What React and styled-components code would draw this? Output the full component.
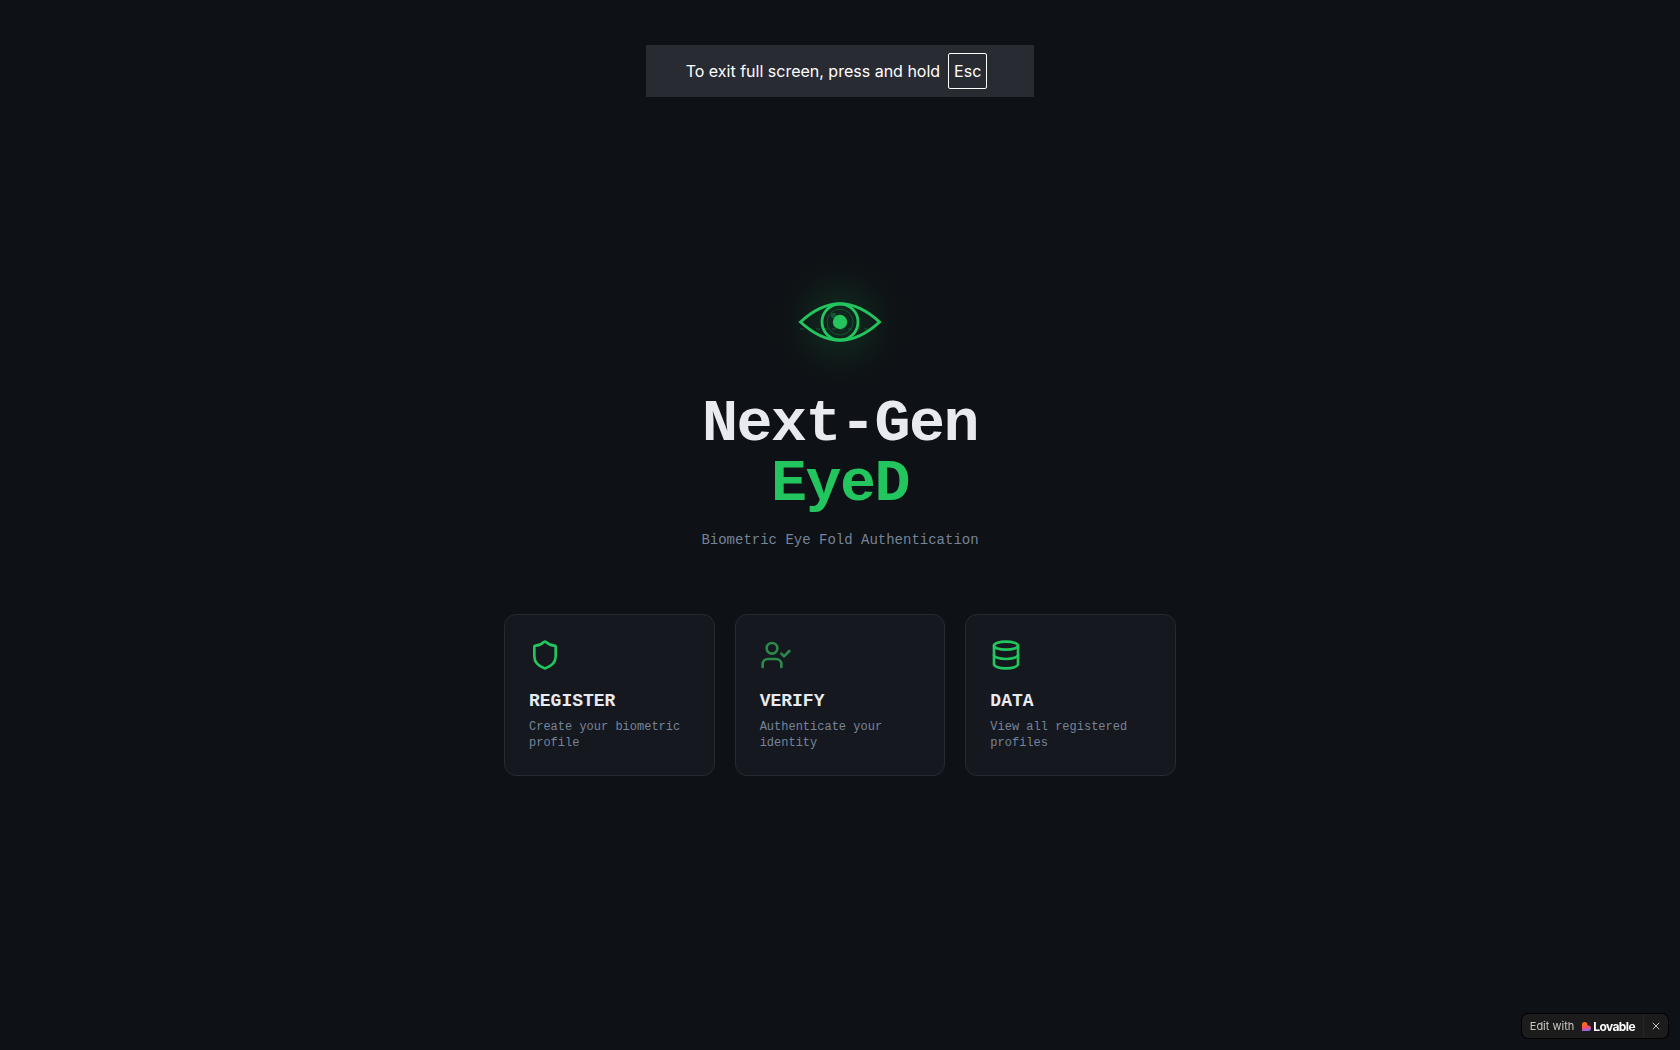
import React from "react";
import styled, { createGlobalStyle } from "styled-components";
import { Shield, UserCheck, Database, X } from "lucide-react";

const colors = {
  background: "#0e1115",
  card: "#15181e",
  border: "#262a33",
  white: "#e8eaef",
  muted: "#76849a",
  green: "#22c55e",
  dimGreen: "#2a8a4b",
  toast: "#292b33",
};

const mono = `"Liberation Mono", monospace`;
const sans = `Inter, sans-serif`;

const GlobalStyle = createGlobalStyle`
  * {
    box-sizing: border-box;
    margin: 0;
  }
  body {
    background: ${colors.background};
    color: ${colors.white};
    font-family: ${mono};
  }
`;

const Page = styled.main`
  display: flex;
  flex-direction: column;
  align-items: center;
  justify-content: center;
  min-height: 100vh;
  padding: 24px;
`;

const Hero = styled.header`
  display: flex;
  flex-direction: column;
  align-items: center;
  margin-bottom: 64px;
  text-align: center;
`;

const EyeLogo = styled.svg`
  width: 96px;
  height: 96px;
  margin-bottom: 24px;
  overflow: visible;
`;

const Title = styled.h1`
  font-size: 60px;
  font-weight: 700;
  line-height: 60px;
  letter-spacing: -0.025em;
  span {
    display: block;
    color: ${colors.green};
  }
`;

const Subtitle = styled.p`
  margin-top: 16px;
  font-size: 14px;
  line-height: 20px;
  color: ${colors.muted};
`;

const CardGrid = styled.nav`
  display: grid;
  grid-template-columns: repeat(3, 1fr);
  gap: 20px;
  width: 100%;
  max-width: 672px;
`;

const Card = styled.button`
  display: flex;
  flex-direction: column;
  align-items: flex-start;
  padding: 24px;
  border: 1px solid ${colors.border};
  border-radius: 12px;
  background: ${colors.card};
  font-family: ${mono};
  text-align: left;
  cursor: pointer;
  svg {
    margin-bottom: 16px;
    color: ${({ $dim }) => ($dim ? colors.dimGreen : colors.green)};
  }
`;

const CardTitle = styled.span`
  margin-bottom: 4px;
  font-size: 18px;
  font-weight: 700;
  line-height: 28px;
  color: ${colors.white};
`;

const CardText = styled.span`
  font-size: 12px;
  line-height: 16px;
  color: ${colors.muted};
`;

const ToastContainer = styled.div`
  position: fixed;
  top: 45px;
  left: 0;
  right: 0;
  display: flex;
  justify-content: center;
`;

const Toast = styled.p`
  display: flex;
  align-items: center;
  gap: 8px;
  padding: 8px 47px 8px 40px;
  background: ${colors.toast};
  color: #ffffff;
  font-family: ${sans};
  font-size: 16px;
  line-height: 24px;
  kbd {
    padding: 5px;
    border: 1px solid #ffffff;
    border-radius: 2px;
    font-family: inherit;
  }
`;

const Badge = styled.aside`
  position: fixed;
  right: 12px;
  bottom: 12px;
  display: flex;
  align-items: stretch;
  height: 24px;
  border-radius: 6px;
  background: #1c1c1c;
  box-shadow: 0 0 0 1px #000000;
  font-family: ${sans};
`;

const BadgeLink = styled.a`
  display: flex;
  align-items: center;
  gap: 8px;
  padding: 0 8px;
  border-right: 1px solid #272727;
  color: #c8c6c0;
  font-size: 11px;
  text-decoration: none;
`;

const Brand = styled.span`
  display: flex;
  align-items: center;
  gap: 2px;
  color: #ffffff;
  font-size: 12px;
  font-weight: 700;
  letter-spacing: -0.05em;
`;

const CloseButton = styled.button`
  display: flex;
  align-items: center;
  justify-content: center;
  width: 24px;
  padding: 0;
  border: 0;
  background: transparent;
  color: #c8c6c0;
  cursor: pointer;
`;

const cards = [
  { title: "REGISTER", text: "Create your biometric profile", Icon: Shield },
  {
    title: "VERIFY",
    text: "Authenticate your identity",
    Icon: UserCheck,
    dim: true,
  },
  { title: "DATA", text: "View all registered profiles", Icon: Database },
];

const Eye = () => (
  <EyeLogo viewBox="0 0 96 96" fill="none" stroke={colors.green} aria-hidden>
    <defs>
      <radialGradient id="glow">
        <stop offset="0" stopColor={colors.green} stopOpacity="0.13" />
        <stop offset="0.3" stopColor={colors.green} stopOpacity="0.1" />
        <stop offset="0.6" stopColor={colors.green} stopOpacity="0.04" />
        <stop offset="0.8" stopColor={colors.green} stopOpacity="0.012" />
        <stop offset="1" stopColor={colors.green} stopOpacity="0" />
      </radialGradient>
    </defs>
    <circle cx="48" cy="48" r="68" fill="url(#glow)" stroke="none" />
    <path
      d="M8.5 48 Q48 11.5 87.5 48 Q48 84.5 8.5 48 Z"
      strokeWidth="3"
      strokeLinejoin="miter"
    />
    <circle cx="48" cy="48" r="18" strokeWidth="2.8" />
    <circle cx="48" cy="48" r="13" strokeWidth="1" opacity="0.3" />
    <circle cx="41.5" cy="41.5" r="2.8" fill={colors.green} stroke="none" opacity="0.3" />
    <circle cx="48" cy="48" r="7.2" fill={colors.green} stroke="none" />
    <path d="M8 55 H88" strokeWidth="1.4" strokeDasharray="4 4" opacity="0.2" />
  </EyeLogo>
);

const LovableMark = () => (
  <svg width="9" height="9" viewBox="0 0 10 10" aria-hidden>
    <defs>
      <linearGradient id="mark" x1="0.3" y1="0" x2="0.5" y2="1">
        <stop offset="0.25" stopColor="#ff6a1a" />
        <stop offset="0.6" stopColor="#fb4a6d" />
        <stop offset="1" stopColor="#7a6cf5" />
      </linearGradient>
    </defs>
    <path
      d="M0 3 A3 3 0 0 1 6 3 V4 H7 A3 3 0 0 1 7 10 H0 Z"
      fill="url(#mark)"
    />
  </svg>
);

const App = () => {
  return (
    <>
      <GlobalStyle />
      <ToastContainer>
        <Toast role="status">
          To exit full screen, press and hold <kbd>Esc</kbd>
        </Toast>
      </ToastContainer>
      <Page>
        <Hero>
          <Eye />
          <Title>
            Next-Gen <span>EyeD</span>
          </Title>
          <Subtitle>Biometric Eye Fold Authentication</Subtitle>
        </Hero>
        <CardGrid>
          {cards.map(({ title, text, Icon, dim }) => (
            <Card type="button" key={title} $dim={dim}>
              <Icon size={32} />
              <CardTitle>{title}</CardTitle>
              <CardText>{text}</CardText>
            </Card>
          ))}
        </CardGrid>
      </Page>
      <Badge>
        <BadgeLink href="#edit">
          Edit with
          <Brand>
            <LovableMark />
            Lovable
          </Brand>
        </BadgeLink>
        <CloseButton type="button" aria-label="Close">
          <X size={12} strokeWidth={2} />
        </CloseButton>
      </Badge>
    </>
  );
};

export default App;
